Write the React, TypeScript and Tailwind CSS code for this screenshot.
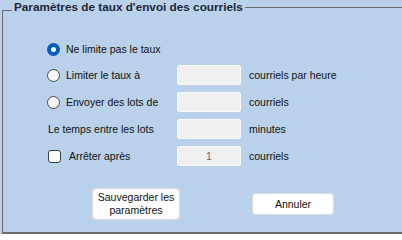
function Radio({ checked }: { checked?: boolean }) {
  return checked ? (
    <span className="flex h-[13px] w-[13px] shrink-0 items-center justify-center rounded-full bg-[#005fb8]">
      <span className="h-[5px] w-[5px] rounded-full bg-white" />
    </span>
  ) : (
    <span className="h-[13px] w-[13px] shrink-0 rounded-full border border-[#4a4a4a] bg-[#f7f7f7]" />
  );
}

function Field({ value }: { value?: string }) {
  return (
    <div className="flex h-[20px] w-[64px] shrink-0 items-center justify-center rounded-[2px] border border-[#f9f9f9] bg-[#f0f0f0] text-[#6d6d6d]">
      {value}
    </div>
  );
}

export default function App() {
  return (
    <div
      className="h-[234px] w-[402px] overflow-hidden bg-[#b9d1ea] text-[10.5px] leading-[13px] text-[#111]"
      style={{ fontFamily: '"Liberation Sans", Arial, sans-serif' }}
    >
      {/* group box title */}
      <div className="ml-[2px] flex h-[14px] items-start">
        <div className="mt-[10px] h-[4px] w-[10px] border-l border-t border-[#6b6b6b]" />
        <span className="px-[2px] text-[11.75px] font-bold leading-[14px] text-[#1d2733]">
          Paramètres de taux d'envoi des courriels
        </span>
        <div className="mt-[7px] flex-1 border-t border-[#6b6b6b]" />
      </div>

      {/* group box body */}
      <div className="ml-[2px] h-[220px] border-b-2 border-l border-[#6b6b6b] pl-[44px] pt-[25px]">
        <div className="flex h-[20px] items-center gap-[6px]">
          <Radio checked />
          <span>Ne limite pas le taux</span>
        </div>

        <div className="mt-[6px] flex flex-col gap-[7px]">
          <div className="flex h-[20px] items-center">
            <div className="flex w-[130px] items-center gap-[6px]">
              <Radio />
              <span>Limiter le taux à</span>
            </div>
            <Field />
            <span className="ml-[8px]">courriels par heure</span>
          </div>

          <div className="flex h-[20px] items-center">
            <div className="flex w-[130px] items-center gap-[6px]">
              <Radio />
              <span>Envoyer des lots de</span>
            </div>
            <Field />
            <span className="ml-[8px]">courriels</span>
          </div>

          <div className="flex h-[20px] items-center">
            <div className="w-[130px] pl-[1px]">Le temps entre les lots</div>
            <Field />
            <span className="ml-[8px]">minutes</span>
          </div>

          <div className="flex h-[20px] items-center">
            <div className="flex w-[130px] items-center gap-[8px] pl-[1px]">
              <span className="h-[13px] w-[13px] shrink-0 rounded-[3px] border border-[#3f3f3f] bg-[#fbfbfb]" />
              <span>Arrêter après</span>
            </div>
            <Field value="1" />
            <span className="ml-[8px]">courriels</span>
          </div>
        </div>

        <div className="ml-[45px] mt-[22px] flex items-center gap-[72px]">
          <button className="flex h-[32px] w-[88px] items-center justify-center rounded-[4px] border border-[#dcdcdc] bg-white text-center leading-[13px]">
            Sauvegarder les
            <br />
            paramètres
          </button>
          <button className="h-[22px] w-[82px] rounded-[4px] border border-[#dcdcdc] bg-white">
            Annuler
          </button>
        </div>
      </div>
    </div>
  );
}
